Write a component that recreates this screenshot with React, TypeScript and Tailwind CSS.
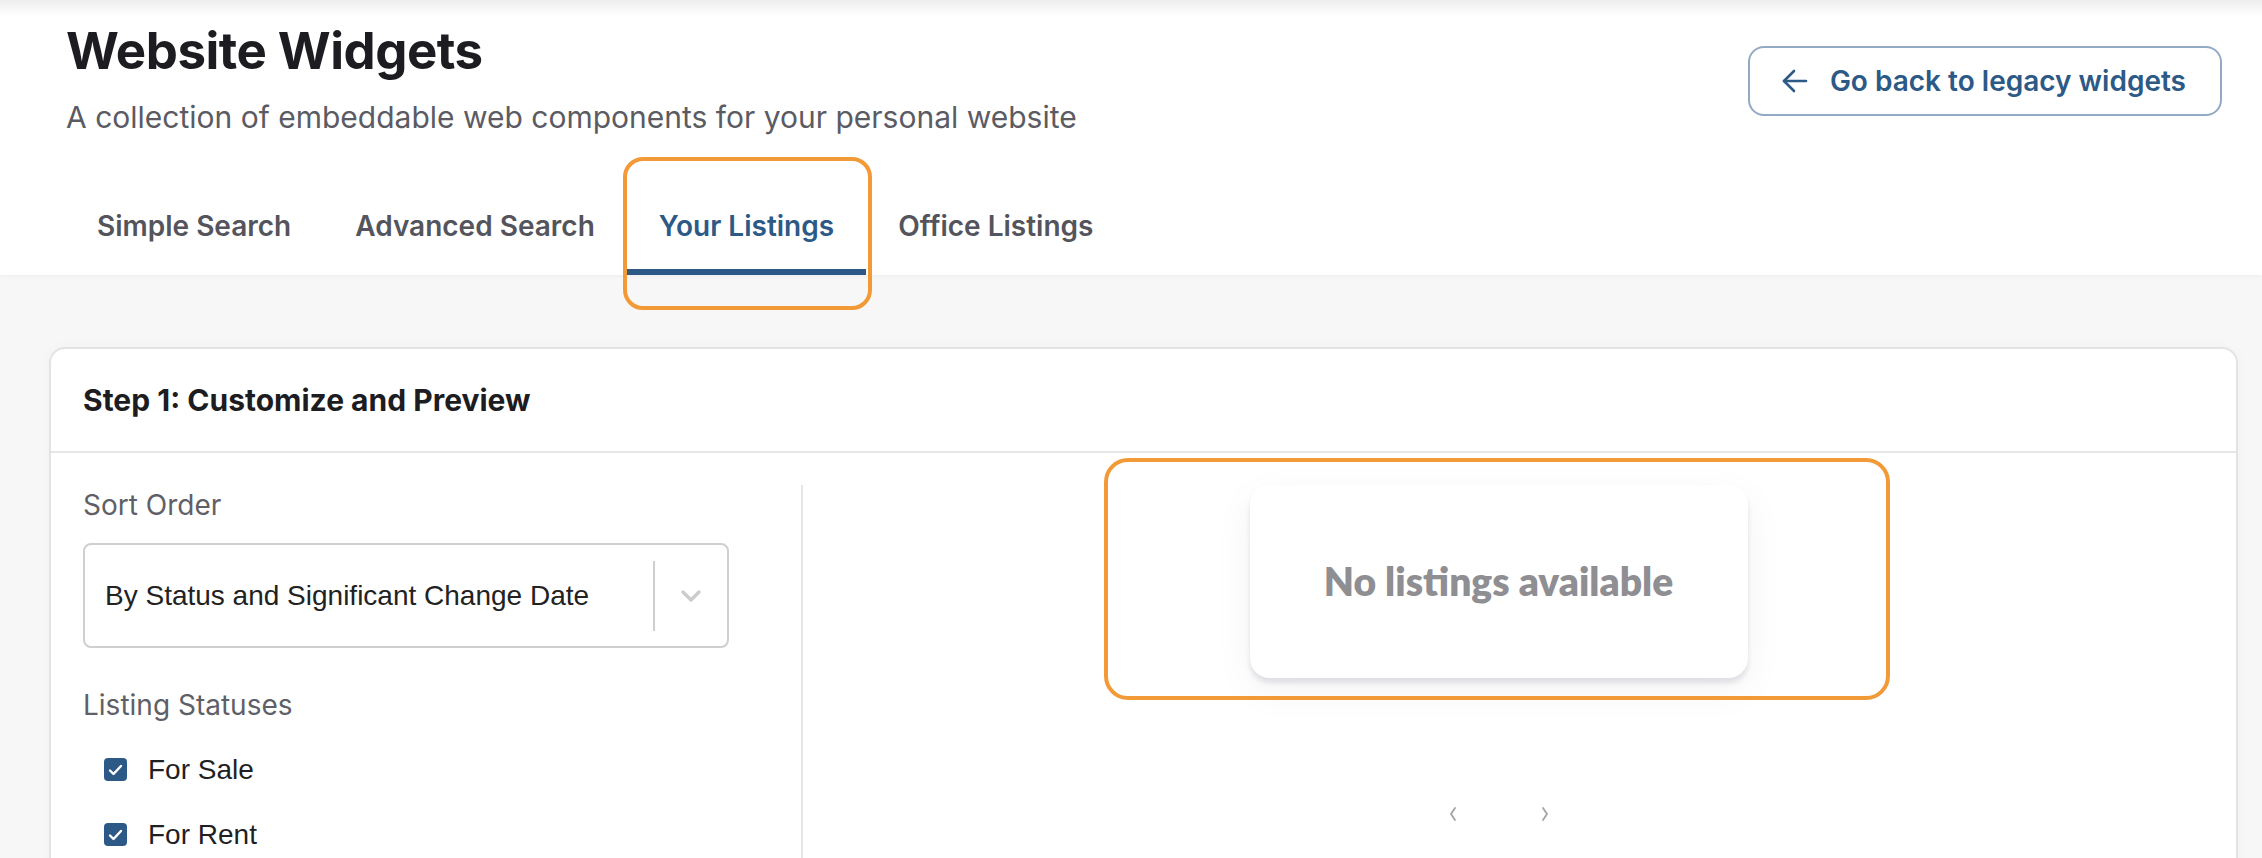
import { useState } from 'react'

const tabs = ['Simple Search', 'Advanced Search', 'Your Listings', 'Office Listings']

function ArrowLeftIcon() {
  return (
    <svg width="26" height="24" viewBox="0 0 26 24" fill="none" stroke="currentColor" strokeWidth={2.6} strokeLinecap="round" strokeLinejoin="round" aria-hidden="true">
      <path d="M12 2 2 12l10 10" />
      <path d="M2 12h22" />
    </svg>
  )
}

function Chevron({ dir }: { dir: 'left' | 'right' }) {
  return (
    <svg width="10" height="16" viewBox="0 0 10 16" fill="none" stroke="#a3a3a8" strokeWidth={1.8} strokeLinecap="round" strokeLinejoin="round" aria-hidden="true">
      {dir === 'left' ? <path d="M7 2 3 8l4 6" /> : <path d="M3 2l4 6-4 6" />}
    </svg>
  )
}

function Checkbox({ label }: { label: string }) {
  const [checked, setChecked] = useState(true)
  return (
    <label className="flex h-[65px] cursor-pointer items-center gap-[21px] pl-[21px]">
      <button
        onClick={() => setChecked((c) => !c)}
        className={`flex h-[23px] w-[23px] items-center justify-center rounded-[4px] ${
          checked ? 'bg-[#2d5986]' : 'border-2 border-[#aaa] bg-white'
        }`}
        aria-checked={checked}
        role="checkbox"
      >
        {checked && (
          <svg width="15" height="12" viewBox="0 0 15 12" fill="none" stroke="white" strokeWidth={2.4} strokeLinecap="round" strokeLinejoin="round">
            <path d="M2 6.5 5.5 10 13 2" />
          </svg>
        )}
      </button>
      <span className="font-['Liberation_Sans',sans-serif] text-[28px] leading-[40px] text-[#1f1f24]">{label}</span>
    </label>
  )
}

export default function App() {
  const [active, setActive] = useState('Your Listings')

  return (
    <div className="relative h-[858px] overflow-hidden bg-[#f7f7f7] font-['Inter',sans-serif]">
      <header className="relative h-[275px] bg-white shadow-[0_2px_4px_rgba(0,0,0,0.03)]">
        <div className="pointer-events-none absolute inset-x-0 top-0 h-[16px] bg-gradient-to-b from-[rgba(0,0,0,0.07)] to-transparent" />
        <div className="flex items-start justify-between pl-[66px] pr-[40px] pt-[21px]">
          <div>
            <h1 className="text-[51px] font-bold leading-[60px] tracking-[-0.01em] text-[#1c1c21]">Website Widgets</h1>
            <p className="mt-[16px] text-[30px] leading-[40px] text-[#5b5b63]">
              A collection of embeddable web components for your personal website
            </p>
          </div>
          <button className="mt-[25px] flex h-[70px] items-center gap-[22px] rounded-[16px] border-2 border-[#93aac4] pl-[32px] pr-[34px] text-[28px] font-semibold text-[#2d5986]">
            <ArrowLeftIcon />
            Go back to legacy widgets
          </button>
        </div>
        <nav className="absolute bottom-0 left-[64px] flex">
          {tabs.map((t) => (
            <button
              key={t}
              onClick={() => setActive(t)}
              className={`border-b-[6px] px-[32px] pb-[23px] pt-[29px] text-[28px] font-semibold leading-[40px] first:pl-[33px] ${
                active === t ? 'border-[#2d5986] text-[#2d5986]' : 'border-transparent text-[#54545c]'
              }`}
            >
              {t}
            </button>
          ))}
        </nav>
      </header>

      <section className="ml-[49px] mr-[24px] mt-[72px] rounded-[16px] border-2 border-[#e3e3e3] bg-white shadow-[0_0_12px_rgba(0,0,0,0.03)]">
        <div className="flex h-[104px] items-center border-b-2 border-[#e6e6e6] px-[32px]">
          <h2 className="text-[30px] font-bold text-[#1c1c21]">Step 1: Customize and Preview</h2>
        </div>
        <div className="flex h-[420px] pt-[32px]">
          <div className="w-[752px] border-r-2 border-[#e6e6e6] pl-[32px]">
            <div className="text-[28px] leading-[40px] text-[#5f5f67]">Sort Order</div>
            <div className="mt-[18px] flex h-[105px] w-[646px] items-center rounded-[8px] border-2 border-[#cfcfcf]">
              <span className="flex-1 pl-[20px] font-['Liberation_Sans',sans-serif] text-[28px] text-[#222]">
                By Status and Significant Change Date
              </span>
              <span className="h-[70px] w-[2px] bg-[#cfcfcf]" />
              <span className="flex w-[72px] items-center justify-center">
                <svg width="22" height="14" viewBox="0 0 22 14" fill="none" stroke="#cccccc" strokeWidth={3.5} strokeLinecap="round" strokeLinejoin="round">
                  <path d="M3 3l8 8 8-8" />
                </svg>
              </span>
            </div>
            <div className="mt-[37px] text-[28px] leading-[40px] text-[#5f5f67]">Listing Statuses</div>
            <div className="mt-[12px]">
              <Checkbox label="For Sale" />
              <Checkbox label="For Rent" />
            </div>
          </div>
          <div className="flex flex-1 flex-col items-center pr-[42px]">
            <div className="flex h-[193px] w-[498px] items-center justify-center rounded-[20px] bg-white shadow-[0_5px_5px_rgba(60,60,110,0.13),0_12px_40px_rgba(0,0,0,0.05)]">
              <span className="font-['Lato',sans-serif] text-[39px] font-extrabold text-[#8e8e93]">No listings available</span>
            </div>
            <div className="mt-[128px] flex items-center gap-[82px]">
              <Chevron dir="left" />
              <Chevron dir="right" />
            </div>
          </div>
        </div>
      </section>

      {/* orange highlight annotations */}
      <div className="pointer-events-none absolute left-[623px] top-[157px] h-[153px] w-[249px] rounded-[20px] border-4 border-[#f29a38]" />
      <div className="pointer-events-none absolute left-[1104px] top-[458px] h-[242px] w-[786px] rounded-[24px] border-4 border-[#f29a38]" />
    </div>
  )
}
